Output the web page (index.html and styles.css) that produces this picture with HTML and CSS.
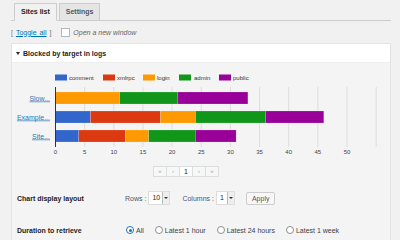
FILE: index.html
```html
<!DOCTYPE html>
<html lang="en">
<head>
  <meta charset="utf-8" />
  <meta name="viewport" content="width=device-width, initial-scale=1.0" />
  <title>Blocked by target</title>
  <link rel="stylesheet" href="styles.css">
</head>

<body>
  <div class="wrap">
    <nav class="tabs">
      <a class="tab active" href="#">Sites list</a>
      <a class="tab" href="#">Settings</a>
    </nav>

    <div class="toolbar">
      <span class="bracket">[&nbsp;<a href="#">Toggle all</a>&nbsp;]</span>
      <label class="check"><span class="box"></span><em>Open a new window</em></label>
    </div>

    <div class="panel">
      <div class="panel-head"><span class="caret"></span>Blocked by target in logs</div>
      <div class="panel-body">
        <svg class="chart" width="378" height="96" viewBox="0 0 378 96">
          <!-- legend -->
          <g class="legend">
            <rect x="43" y="11.5" width="12" height="6" fill="#3366cc" />
            <text x="57" y="17">comment</text>
            <rect x="91" y="11.5" width="12" height="6" fill="#dc3912" />
            <text x="105" y="17">xmlrpc</text>
            <rect x="131" y="11.5" width="12" height="6" fill="#ff9900" />
            <text x="145" y="17">login</text>
            <rect x="167" y="11.5" width="12" height="6" fill="#109618" />
            <text x="182" y="17">admin</text>
            <rect x="207" y="11.5" width="12" height="6" fill="#990099" />
            <text x="221" y="17">public</text>
          </g>
          <!-- grid -->
          <g class="grid">
            <line x1="72.65" y1="24" x2="72.65" y2="84" />
            <line x1="101.8" y1="24" x2="101.8" y2="84" />
            <line x1="130.95" y1="24" x2="130.95" y2="84" />
            <line x1="160.1" y1="24" x2="160.1" y2="84" />
            <line x1="189.25" y1="24" x2="189.25" y2="84" />
            <line x1="218.4" y1="24" x2="218.4" y2="84" />
            <line x1="247.55" y1="24" x2="247.55" y2="84" />
            <line x1="276.7" y1="24" x2="276.7" y2="84" />
            <line x1="305.85" y1="24" x2="305.85" y2="84" />
            <line x1="335" y1="24" x2="335" y2="84" />
            <line x1="364.15" y1="24" x2="364.15" y2="84" />
          </g>
          <!-- bars: 5.83px per unit, zero at 43.5 -->
          <g class="bars">
            <rect x="43.5" y="29" width="64.1" height="12" fill="#ff9900" />
            <rect x="107.6" y="29" width="58.3" height="12" fill="#109618" />
            <rect x="165.9" y="29" width="70" height="12" fill="#990099" />

            <rect x="43.5" y="48" width="35" height="12" fill="#3366cc" />
            <rect x="78.5" y="48" width="70" height="12" fill="#dc3912" />
            <rect x="148.5" y="48" width="35" height="12" fill="#ff9900" />
            <rect x="183.5" y="48" width="70" height="12" fill="#109618" />
            <rect x="253.5" y="48" width="58.3" height="12" fill="#990099" />

            <rect x="43.5" y="67" width="23.3" height="12" fill="#3366cc" />
            <rect x="66.8" y="67" width="46.6" height="12" fill="#dc3912" />
            <rect x="113.4" y="67" width="23.3" height="12" fill="#ff9900" />
            <rect x="136.7" y="67" width="46.6" height="12" fill="#109618" />
            <rect x="183.3" y="67" width="40.8" height="12" fill="#990099" />
          </g>
          <line class="axis" x1="43.5" y1="24" x2="43.5" y2="84" />
          <!-- row labels -->
          <g class="rows">
            <a href="#"><text x="38" y="37.5">Slow...</text></a>
            <a href="#"><text x="38" y="56.5">Example...</text></a>
            <a href="#"><text x="38" y="75.5">Site...</text></a>
          </g>
          <!-- ticks -->
          <g class="ticks">
            <text x="43.5" y="91">0</text>
            <text x="72.65" y="91">5</text>
            <text x="101.8" y="91">10</text>
            <text x="130.95" y="91">15</text>
            <text x="160.1" y="91">20</text>
            <text x="189.25" y="91">25</text>
            <text x="218.4" y="91">30</text>
            <text x="247.55" y="91">35</text>
            <text x="276.7" y="91">40</text>
            <text x="305.85" y="91">45</text>
            <text x="335" y="91">50</text>
          </g>
        </svg>

        <div class="pager">
          <span class="page">&laquo;</span>
          <span class="page">&lsaquo;</span>
          <span class="page current">1</span>
          <span class="page">&rsaquo;</span>
          <span class="page">&raquo;</span>
        </div>

        <div class="form">
          <div class="label">Chart display layout</div>
          <div class="controls">
            <span class="field-name">Rows :</span>
            <span class="select rows-select"><span class="value">10</span><span class="arrow"></span></span>
            <span class="field-name cols-name">Columns :</span>
            <span class="select cols-select"><span class="value">1</span><span class="arrow"></span></span>
            <button class="apply">Apply</button>
          </div>

          <div class="label">Duration to retrieve</div>
          <div class="controls">
            <label class="radio"><span class="dot checked"></span>All</label>
            <label class="radio"><span class="dot"></span>Latest 1 hour</label>
            <label class="radio"><span class="dot"></span>Latest 24 hours</label>
            <label class="radio"><span class="dot"></span>Latest 1 week</label>
          </div>
        </div>
      </div>
    </div>
  </div>
</body>
</html>
```

FILE: styles.css
```css
body {
  margin: 0;
  background: #f1f1f1;
  font-family: "Liberation Sans", Arial, sans-serif;
  font-size: 7px;
  color: #1d2327;
}

a {
  color: #0073aa;
}

.wrap {
  padding: 0 9px 0 11px;
}

/* tabs */
.tabs {
  display: flex;
  align-items: flex-end;
  padding: 3px 0 0 3px;
  border-bottom: 1px solid #ccc;
}

.tab {
  box-sizing: border-box;
  height: 18px;
  line-height: 16px;
  margin-bottom: -1px;
  margin-right: 2px;
  padding: 0 6px;
  border: 1px solid #ccc;
  background: #e5e5e5;
  color: #50575e;
  font-weight: bold;
  text-decoration: none;
}

.tab.active {
  background: #f1f1f1;
  border-bottom-color: #f1f1f1;
  color: #1d2327;
}

/* toolbar */
.toolbar {
  display: flex;
  align-items: center;
  height: 10px;
  margin-top: 6px;
}

.bracket {
  color: #777;
  word-spacing: 1px;
}

.check {
  display: flex;
  align-items: center;
  margin-left: 10px;
  color: #666;
}

.box {
  box-sizing: border-box;
  width: 9px;
  height: 9px;
  margin-right: 3px;
  background: #fff;
  border: 1px solid #b4b9be;
}

/* panel */
.panel {
  margin-top: 6px;
  border: 1px solid #e2e4e7;
  background: #f4f4f4;
}

.panel-head {
  display: flex;
  align-items: center;
  height: 18px;
  padding-left: 4px;
  background: #fff;
  border-bottom: 1px solid #eee;
  font-weight: bold;
}

.caret {
  width: 0;
  height: 0;
  margin-right: 3px;
  border-left: 2.5px solid transparent;
  border-right: 2.5px solid transparent;
  border-top: 3px solid #23282d;
}

.chart {
  display: block;
}

.legend text {
  font-size: 6px;
  fill: #333;
}

.grid line {
  stroke: #ddd;
  stroke-width: 1;
}

.axis {
  stroke: #333;
  stroke-width: 1;
}

.bars rect {
  stroke: #fff;
  stroke-opacity: 0.35;
  stroke-width: 0.5;
}

.rows text {
  font-size: 7px;
  fill: #2e77b8;
  text-anchor: end;
  text-decoration: underline;
}

.ticks text {
  font-size: 6px;
  fill: #444;
  text-anchor: middle;
}

/* pager */
.pager {
  display: flex;
  margin: 7px 0 0 141px;
}

.page {
  box-sizing: border-box;
  width: 14px;
  height: 11px;
  line-height: 9px;
  margin-right: -1px;
  text-align: center;
  border: 1px solid #ddd;
  background: #f6f7f7;
  color: #a7aaad;
  font-size: 6px;
}

.page.current {
  background: #fff;
  color: #1d2327;
  font-size: 7px;
}

/* settings form */
.form {
  display: grid;
  grid-template-columns: 108px 1fr;
  grid-auto-rows: 32px;
  align-items: center;
  margin-top: 5px;
  padding-left: 5px;
}

.label {
  font-weight: bold;
}

.controls {
  display: flex;
  align-items: center;
  color: #3c434a;
}

.field-name {
  color: #50575e;
}

.cols-name {
  margin-left: 12px;
}

.select {
  box-sizing: border-box;
  display: flex;
  height: 14px;
  margin-left: 2px;
  background: #fff;
  border: 1px solid #ddd;
}

.rows-select {
  width: 22px;
}

.cols-select {
  width: 19px;
}

.select .value {
  flex: 1;
  line-height: 12px;
  padding-left: 3px;
  color: #1d2327;
}

.select .arrow {
  position: relative;
  width: 6px;
  background: #eee;
  border-left: 1px solid #bbb;
}

.select .arrow::after {
  content: "";
  position: absolute;
  left: 1px;
  top: 5px;
  border-left: 2px solid transparent;
  border-right: 2px solid transparent;
  border-top: 2px solid #333;
}

.apply {
  box-sizing: border-box;
  height: 13px;
  margin-left: 11px;
  padding: 0 5px;
  background: #f7f7f7;
  border: 1px solid #ccc;
  border-radius: 2px;
  color: #555;
  font-family: inherit;
  font-size: 7px;
}

.radio {
  display: flex;
  align-items: center;
  margin-right: 10px;
  color: #3c434a;
}

.dot {
  box-sizing: border-box;
  position: relative;
  width: 8px;
  height: 8px;
  margin: 0 2px 0 1px;
  border: 1px solid #8c8f94;
  border-radius: 50%;
  background: #fff;
}

.dot.checked {
  border-color: #2271b1;
}

.dot.checked::after {
  content: "";
  position: absolute;
  left: 1.5px;
  top: 1.5px;
  width: 3px;
  height: 3px;
  border-radius: 50%;
  background: #2271b1;
}
```
